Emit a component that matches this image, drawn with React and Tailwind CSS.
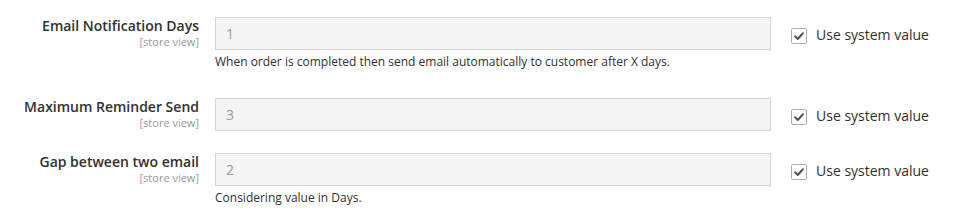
export default function App() {
  const rows = [
    {
      label: "Email Notification Days",
      value: "1",
      hint: "When order is completed then send email automatically to customer after X days.",
      mb: "mb-[27px]",
    },
    { label: "Maximum Reminder Send", value: "3", hint: null, mb: "mb-[22px]" },
    { label: "Gap between two email", value: "2", hint: "Considering value in Days.", mb: "" },
  ];

  return (
    <div className="w-[961px] h-[224px] bg-white pt-[17px] font-['Open_Sans',sans-serif] text-[#303030]">
      {rows.map((row) => (
        <div key={row.label} className={`flex items-start ${row.mb}`}>
          <div className="w-[200px] pr-[1px] pt-[1px] text-right">
            <div className="text-[14px] leading-[16px] font-semibold text-[#303030]">
              {row.label}
            </div>
            <div className="text-[11px] leading-[14px] text-[#999] mt-[1px]">[store view]</div>
          </div>
          <div className="w-[556px] ml-[15px]">
            <div className="h-[33px] border border-[#d6d6d6] bg-[#f4f4f4] pl-[10px] flex items-center text-[14px] text-[#9a9a9a]">
              {row.value}
            </div>
            {row.hint && (
              <div className="mt-[3px] text-[12px] leading-[18px] text-[#303030]">{row.hint}</div>
            )}
          </div>
          <label className="ml-[20px] pt-[9px] flex items-start">
            <span className="mt-[2px] w-[16px] h-[16px] border border-[#adadad] rounded-[2px] bg-white flex items-center justify-center">
              <svg width="12" height="12" viewBox="0 0 12 12" fill="none">
                <path d="M2 6.2 L4.8 9 L10 3.2" stroke="#514943" strokeWidth="1.9" strokeLinecap="round" strokeLinejoin="round" />
              </svg>
            </span>
            <span className="ml-[9px] text-[14px] leading-[18px] text-[#303030]">Use system value</span>
          </label>
        </div>
      ))}
    </div>
  );
}
